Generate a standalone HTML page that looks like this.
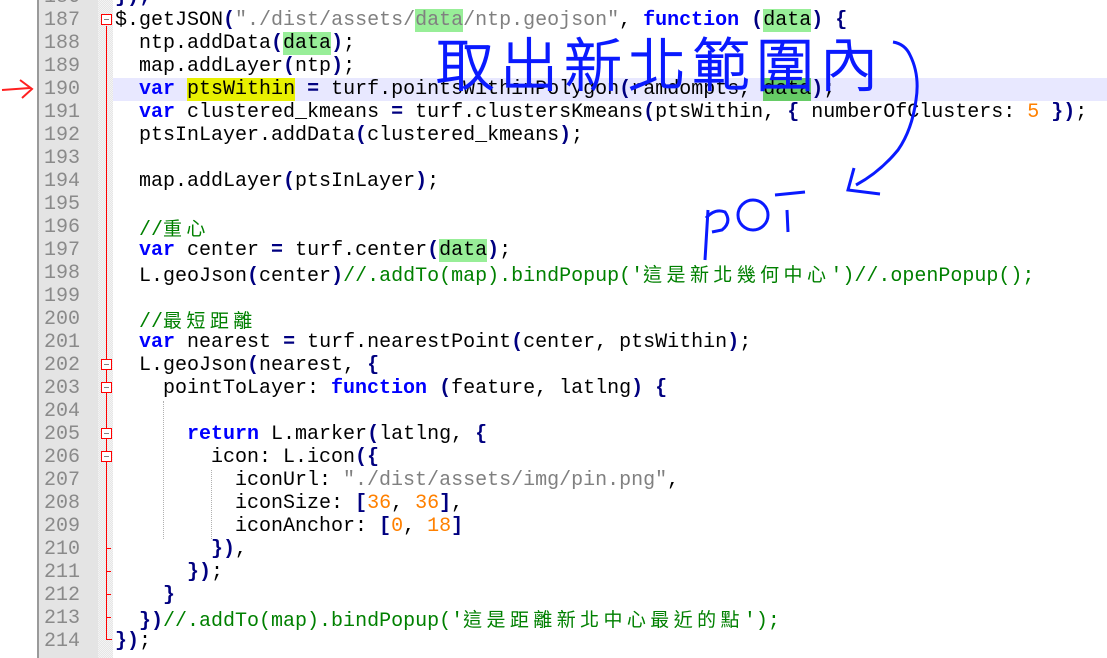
<!DOCTYPE html>
<html><head><meta charset="utf-8">
<style>
html,body{margin:0;padding:0;overflow:hidden;width:1107px;height:658px;}
body{background:#fff;position:relative;font-family:"Liberation Mono","Noto Sans CJK TC",monospace;}
.gl{position:absolute;left:37px;top:0;width:2px;height:658px;background:#9a9a9a;}
.gut{position:absolute;left:39px;top:0;width:59px;height:658px;background:#e4e4e4;}
.fold{position:absolute;left:98px;top:0;width:15px;height:658px;background-color:#f4f4f4;background-image:linear-gradient(45deg,#e6e6e6 25%,transparent 25%,transparent 75%,#e6e6e6 75%),linear-gradient(45deg,#e6e6e6 25%,transparent 25%,transparent 75%,#e6e6e6 75%);background-size:2px 2px;background-position:0 0,1px 1px;}
.num{position:absolute;left:39px;width:41px;text-align:right;color:#8a8a8a;font-size:20px;line-height:23px;height:23px;}
.ln{position:absolute;left:115px;font-size:20px;letter-spacing:0;line-height:23px;height:23px;white-space:pre;color:#000;}
.k{color:#0000ff;font-weight:bold;}
.o{color:#000080;font-weight:bold;}
.s{color:#808080;}
.n{color:#ff8000;}
.c{color:#008000;}
.cj{font-family:"Noto Sans CJK TC",sans-serif;font-size:19px;letter-spacing:4.4px;}
.hg{background:#98ee98;}
.hg2{background:#66cc66;}
.hy{background:#e8f000;}
.cur{position:absolute;left:113px;top:78px;width:994px;height:23px;background:#e8e8ff;}
.rl{position:absolute;left:106px;width:1px;background:#ff0000;}
.box{position:absolute;left:101px;width:9px;height:9px;border:1px solid #ff0000;background:#fff;}
.box:after{content:"";position:absolute;left:2px;top:4px;width:5px;height:1px;background:#808080;}
.tick{position:absolute;left:106px;width:5px;height:1px;background:#ff0000;}
.ig{position:absolute;width:0;border-left:1px dotted #b0b0b0;}
</style></head><body>
<div class="gl"></div><div class="gut"></div><div class="fold"></div>
<div class="cur"></div>
<div class="rl" style="top:26px;height:614px"></div>
<div class="tick" style="top:639px;width:6px"></div>
<div class="box" style="top:14px"></div>
<div class="box" style="top:359px"></div>
<div class="box" style="top:382px"></div>
<div class="box" style="top:428px"></div>
<div class="box" style="top:451px"></div>
<div class="tick" style="top:548px"></div>
<div class="tick" style="top:571px"></div>
<div class="tick" style="top:594px"></div>
<div class="tick" style="top:617px"></div>
<div class="ig" style="left:163px;top:401px;height:138px"></div>
<div class="ig" style="left:211px;top:470px;height:69px"></div>

<div class="num" style="top:-14px">186</div>
<div class="num" style="top:9px">187</div>
<div class="num" style="top:32px">188</div>
<div class="num" style="top:55px">189</div>
<div class="num" style="top:78px">190</div>
<div class="num" style="top:101px">191</div>
<div class="num" style="top:124px">192</div>
<div class="num" style="top:147px">193</div>
<div class="num" style="top:170px">194</div>
<div class="num" style="top:193px">195</div>
<div class="num" style="top:216px">196</div>
<div class="num" style="top:239px">197</div>
<div class="num" style="top:262px">198</div>
<div class="num" style="top:285px">199</div>
<div class="num" style="top:308px">200</div>
<div class="num" style="top:331px">201</div>
<div class="num" style="top:354px">202</div>
<div class="num" style="top:377px">203</div>
<div class="num" style="top:400px">204</div>
<div class="num" style="top:423px">205</div>
<div class="num" style="top:446px">206</div>
<div class="num" style="top:469px">207</div>
<div class="num" style="top:492px">208</div>
<div class="num" style="top:515px">209</div>
<div class="num" style="top:538px">210</div>
<div class="num" style="top:561px">211</div>
<div class="num" style="top:584px">212</div>
<div class="num" style="top:607px">213</div>
<div class="num" style="top:630px">214</div>

<div class="ln" style="top:-14px"><span class="o">});</span></div>
<div class="ln" style="top:9px">$.getJSON<span class="o">(</span><span class="s">"./dist/assets/<span class="hg">data</span>/ntp.geojson"</span>, <span class="k">function</span> <span class="o">(</span><span class="hg">data</span><span class="o">)</span> <span class="o">{</span></div>
<div class="ln" style="top:32px">  ntp.addData<span class="o">(</span><span class="hg">data</span><span class="o">)</span>;</div>
<div class="ln" style="top:55px">  map.addLayer<span class="o">(</span>ntp<span class="o">)</span>;</div>
<div class="ln" style="top:78px">  <span class="k">var</span> <span class="hy">ptsWithin</span> <span class="o">=</span> turf.pointsWithinPolygon<span class="o">(</span>ramdompts, <span class="hg2">data</span><span class="o">)</span>;</div>
<div class="ln" style="top:101px">  <span class="k">var</span> clustered_kmeans <span class="o">=</span> turf.clustersKmeans<span class="o">(</span>ptsWithin, <span class="o">{</span> numberOfClusters: <span class="n">5</span> <span class="o">})</span>;</div>
<div class="ln" style="top:124px">  ptsInLayer.addData<span class="o">(</span>clustered_kmeans<span class="o">)</span>;</div>
<div class="ln" style="top:170px">  map.addLayer<span class="o">(</span>ptsInLayer<span class="o">)</span>;</div>
<div class="ln" style="top:216px">  <span class="c">//<span class="cj">重心</span></span></div>
<div class="ln" style="top:239px">  <span class="k">var</span> center <span class="o">=</span> turf.center<span class="o">(</span><span class="hg">data</span><span class="o">)</span>;</div>
<div class="ln" style="top:262px">  L.geoJson<span class="o">(</span>center<span class="o">)</span><span class="c">//.addTo(map).bindPopup('<span class="cj">這是新北幾何中心</span>')//.openPopup();</span></div>
<div class="ln" style="top:308px">  <span class="c">//<span class="cj">最短距離</span></span></div>
<div class="ln" style="top:331px">  <span class="k">var</span> nearest <span class="o">=</span> turf.nearestPoint<span class="o">(</span>center, ptsWithin<span class="o">)</span>;</div>
<div class="ln" style="top:354px">  L.geoJson<span class="o">(</span>nearest, <span class="o">{</span></div>
<div class="ln" style="top:377px">    pointToLayer: <span class="k">function</span> <span class="o">(</span>feature, latlng<span class="o">)</span> <span class="o">{</span></div>
<div class="ln" style="top:423px">      <span class="k">return</span> L.marker<span class="o">(</span>latlng, <span class="o">{</span></div>
<div class="ln" style="top:446px">        icon: L.icon<span class="o">({</span></div>
<div class="ln" style="top:469px">          iconUrl: <span class="s">"./dist/assets/img/pin.png"</span>,</div>
<div class="ln" style="top:492px">          iconSize: <span class="o">[</span><span class="n">36</span>, <span class="n">36</span><span class="o">]</span>,</div>
<div class="ln" style="top:515px">          iconAnchor: <span class="o">[</span><span class="n">0</span>, <span class="n">18</span><span class="o">]</span></div>
<div class="ln" style="top:538px">        <span class="o">})</span>,</div>
<div class="ln" style="top:561px">      <span class="o">})</span>;</div>
<div class="ln" style="top:584px">    <span class="o">}</span></div>
<div class="ln" style="top:607px">  <span class="o">})</span><span class="c">//.addTo(map).bindPopup('<span class="cj">這是距離新北中心最近的點</span>');</span></div>
<div class="ln" style="top:630px"><span class="o">})</span>;</div>

<svg style="position:absolute;left:0;top:0" width="1107" height="658">
<path d="M2 90 L30 88" stroke="#ff2020" stroke-width="2" fill="none"/>
<path d="M20 80 L32 89 L22 98" stroke="#ff2020" stroke-width="2" fill="none"/>
<text x="436" y="86" fill="#0a1aff" stroke="#0a1aff" stroke-width="1.2" font-family="Noto Sans CJK TC, sans-serif" font-weight="300" font-size="58" letter-spacing="6">取出新北範圍內</text>
<path d="M893 42 Q905 44 910 55 Q920 75 916 100 Q912 130 898 150 Q880 172 856 185" stroke="#0a1aff" stroke-width="3" fill="none"/>
<path d="M854 168 L848 190 L880 194" stroke="#0a1aff" stroke-width="3" fill="none"/>
<path d="M708 210 L705 260 M706 218 Q715 208 725 212 Q732 222 722 230 L712 232" stroke="#0a1aff" stroke-width="3" fill="none"/>
<ellipse cx="753" cy="215" rx="15" ry="15" stroke="#0a1aff" stroke-width="3" fill="none"/>
<path d="M775 195 L805 192 M787 210 L788 232" stroke="#0a1aff" stroke-width="3" fill="none"/>
</svg>
</body></html>
